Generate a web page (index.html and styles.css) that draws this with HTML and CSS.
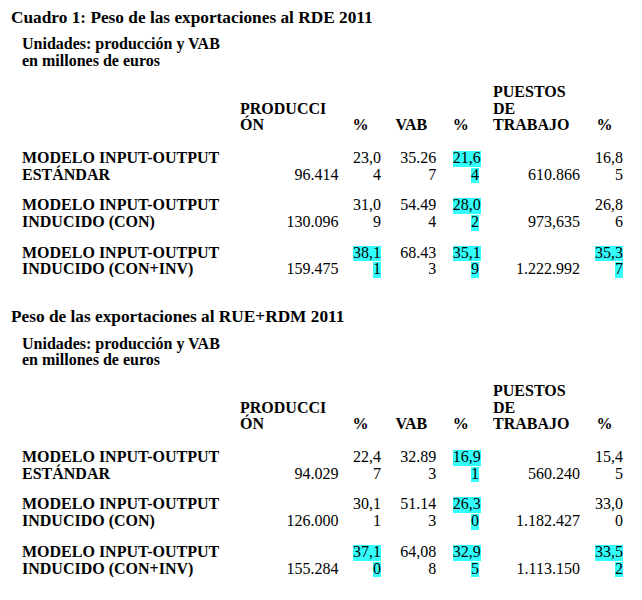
FILE: index.html
```html
<!DOCTYPE html>
<html lang="es">
<head>
<meta charset="utf-8">
<title>Peso de las exportaciones</title>
<link rel="stylesheet" href="styles.css">
</head>
<body>
<main class="page">
  <section class="block">
    <h2 class="title">Cuadro 1: Peso de las exportaciones al RDE 2011</h2>
    <p class="units">Unidades: producción y VAB<br>en millones de euros</p>
    <table class="data">
      <colgroup>
        <col class="c-label"><col class="c-prod"><col class="c-pct1"><col class="c-vab"><col class="c-pct2"><col class="c-jobs"><col class="c-pct3">
      </colgroup>
      <thead>
        <tr>
          <th></th>
          <th>PRODUCCI<br>ÓN</th>
          <th>%</th>
          <th>VAB</th>
          <th>%</th>
          <th>PUESTOS<br>DE<br>TRABAJO</th>
          <th class="last">%</th>
        </tr>
      </thead>
      <tbody>
        <tr>
          <th>MODELO INPUT-OUTPUT<br>ESTÁNDAR</th>
          <td class="prod">96.414</td>
          <td class="pct1">23,0<br>4</td>
          <td class="vab">35.26<br>7</td>
          <td class="pct2"><span class="hl">21,6</span><br><span class="hl">4</span></td>
          <td class="jobs">610.866</td>
          <td class="pct3">16,8<br>5</td>
        </tr>
        <tr>
          <th>MODELO INPUT-OUTPUT<br>INDUCIDO (CON)</th>
          <td class="prod">130.096</td>
          <td class="pct1">31,0<br>9</td>
          <td class="vab">54.49<br>4</td>
          <td class="pct2"><span class="hl">28,0</span><br><span class="hl">2</span></td>
          <td class="jobs">973,635</td>
          <td class="pct3">26,8<br>6</td>
        </tr>
        <tr>
          <th>MODELO INPUT-OUTPUT<br>INDUCIDO (CON+INV)</th>
          <td class="prod">159.475</td>
          <td class="pct1"><span class="hl">38,1</span><br><span class="hl">1</span></td>
          <td class="vab">68.43<br>3</td>
          <td class="pct2"><span class="hl">35,1</span><br><span class="hl">9</span></td>
          <td class="jobs">1.222.992</td>
          <td class="pct3"><span class="hl">35,3</span><br><span class="hl">7</span></td>
        </tr>
      </tbody>
    </table>
  </section>

  <section class="block">
    <h2 class="title">Peso de las exportaciones al RUE+RDM 2011</h2>
    <p class="units">Unidades: producción y VAB<br>en millones de euros</p>
    <table class="data">
      <colgroup>
        <col class="c-label"><col class="c-prod"><col class="c-pct1"><col class="c-vab"><col class="c-pct2"><col class="c-jobs"><col class="c-pct3">
      </colgroup>
      <thead>
        <tr>
          <th></th>
          <th>PRODUCCI<br>ÓN</th>
          <th>%</th>
          <th>VAB</th>
          <th>%</th>
          <th>PUESTOS<br>DE<br>TRABAJO</th>
          <th class="last">%</th>
        </tr>
      </thead>
      <tbody>
        <tr>
          <th>MODELO INPUT-OUTPUT<br>ESTÁNDAR</th>
          <td class="prod">94.029</td>
          <td class="pct1">22,4<br>7</td>
          <td class="vab">32.89<br>3</td>
          <td class="pct2"><span class="hl">16,9</span><br><span class="hl">1</span></td>
          <td class="jobs">560.240</td>
          <td class="pct3">15,4<br>5</td>
        </tr>
        <tr>
          <th>MODELO INPUT-OUTPUT<br>INDUCIDO (CON)</th>
          <td class="prod">126.000</td>
          <td class="pct1">30,1<br>1</td>
          <td class="vab">51.14<br>3</td>
          <td class="pct2"><span class="hl">26,3</span><br><span class="hl">0</span></td>
          <td class="jobs">1.182.427</td>
          <td class="pct3">33,0<br>0</td>
        </tr>
        <tr>
          <th>MODELO INPUT-OUTPUT<br>INDUCIDO (CON+INV)</th>
          <td class="prod">155.284</td>
          <td class="pct1"><span class="hl">37,1</span><br><span class="hl">0</span></td>
          <td class="vab">64,08<br>8</td>
          <td class="pct2"><span class="hl">32,9</span><br><span class="hl">5</span></td>
          <td class="jobs">1.113.150</td>
          <td class="pct3"><span class="hl">33,5</span><br><span class="hl">2</span></td>
        </tr>
      </tbody>
    </table>
  </section>
</main>
</body>
</html>
```

FILE: styles.css
```css
html, body {
  margin: 0;
  padding: 0;
  background: #ffffff;
}

body {
  font-family: "Liberation Serif", "Times New Roman", serif;
  color: #000000;
}

.page {
  padding: 8px 0 0 11px;
  display: flex;
  flex-direction: column;
  gap: 29px;
}

.title {
  margin: 0;
  font-size: 17.3px;
  line-height: 20.8px;
  font-weight: bold;
}

.units {
  margin: 7.6px 0 0 11px;
  font-size: 16px;
  line-height: 16.7px;
  font-weight: bold;
}

.data {
  margin: 14px 0 0 11px;
  border-collapse: collapse;
  border-spacing: 0;
  table-layout: fixed;
  width: 601px;
  font-size: 16px;
  line-height: 16.7px;
}

.c-label { width: 218px; }
.c-prod  { width: 112.5px; }
.c-pct1  { width: 43px; }
.c-vab   { width: 57.3px; }
.c-pct2  { width: 40.2px; }
.c-jobs  { width: 102px; }
.c-pct3  { width: 28px; }

.data th,
.data td {
  padding: 0;
  vertical-align: bottom;
  white-space: nowrap;
}

.data thead th {
  text-align: left;
  font-weight: bold;
  padding-bottom: 2px;
}

.data thead th.last {
  padding-left: 1.5px;
}

.data tbody th {
  text-align: left;
  font-weight: bold;
  padding-top: 14px;
}

.data tbody td {
  text-align: right;
  font-weight: normal;
  padding-top: 14px;
}

.data td.prod { padding-right: 14px; }
.data td.pct1 { padding-right: 14.5px; }
.data td.vab  { padding-right: 16.5px; }
.data td.pct2 { padding-right: 14px; }
.data td.jobs { padding-right: 15px; }
.data td.pct3 { padding-right: 0; }

.hl {
  background: linear-gradient(to bottom, transparent 1.9px, #33ffff 1.9px);
  padding-bottom: 0.7px;
}
```
